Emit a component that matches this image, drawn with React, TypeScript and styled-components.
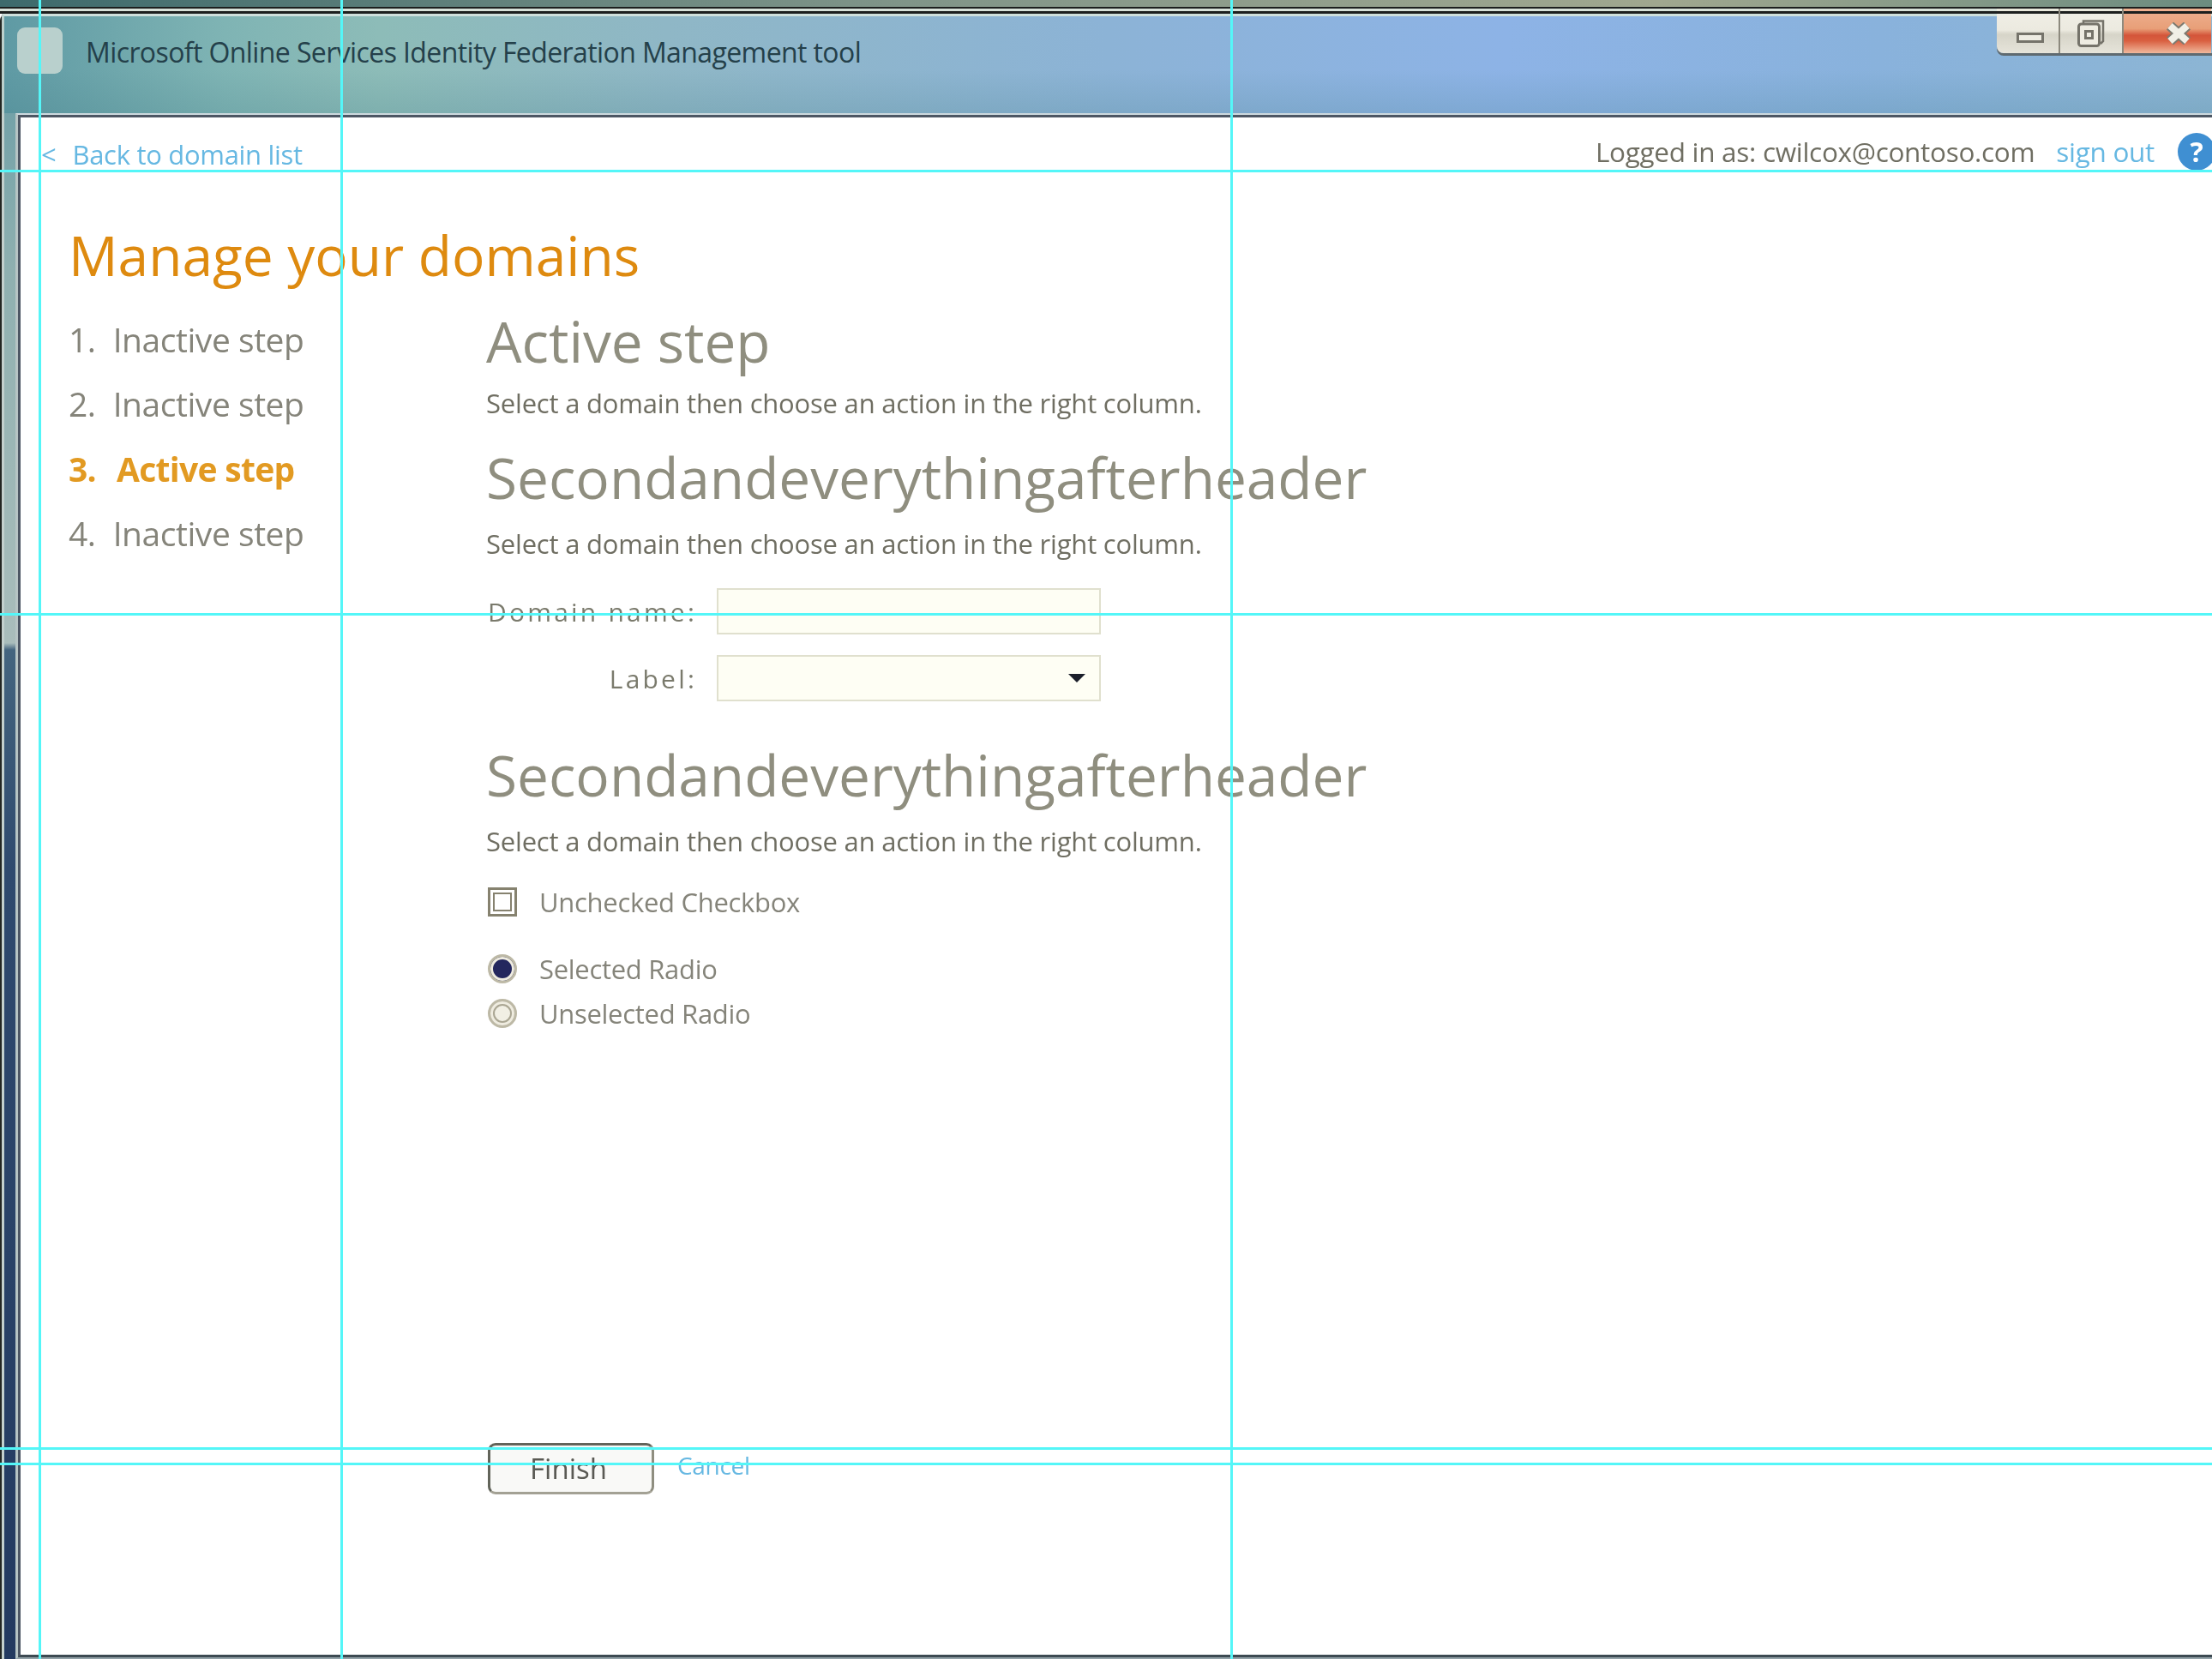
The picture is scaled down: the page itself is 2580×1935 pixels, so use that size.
import React from 'react';
import styled, { createGlobalStyle } from 'styled-components';

const fontStack = '"Open Sans", "Noto Sans", "Liberation Sans", sans-serif';
const orange = '#de8a0f';
const linkBlue = '#66b8e2';
const headGray = '#8f8e7f';
const textGray = '#6f6e62';

const GlobalStyle = createGlobalStyle`
  html, body { margin: 0; padding: 0; background: #fff; }
  body { font-family: ${fontStack}; }
`;

const Screen = styled.div`
  position: relative;
  width: 2580px;
  height: 1935px;
  overflow: hidden;
  display: flex;
  flex-direction: column;
  background: #fff;
`;

const DesktopStrip = styled.div`
  height: 8px;
  flex: none;
  background: linear-gradient(90deg, #3d6a6c 0%, #7f9488 40%, #a0a78f 75%, #6c8c80 100%);
`;

const Rule = styled.div<{ $h: number; $c: string }>`
  height: ${(p) => p.$h}px;
  flex: none;
  background: ${(p) => p.$c};
`;

const WindowFrame = styled.div`
  flex: 1;
  min-height: 0;
  display: flex;
  flex-direction: column;
  border-left: 2px solid #232622;
  border-top-left-radius: 8px;
  box-shadow: inset 3px 0 0 #c3d0cd;
  background: linear-gradient(180deg, #6399a3 0px, #8fb0b0 300px, #a9bdbb 734px, #44657f 742px, #2f4a6e 1000px, #233a60 100%);
`;

const TitleBar = styled.header`
  height: 116px;
  flex: none;
  display: flex;
  align-items: flex-start;
  gap: 27px;
  padding: 13px 0 0 15px;
  box-sizing: border-box;
  border-top: 3px solid #cfe0dc;
  border-left: 3px solid #bcd0cc;
  background:
    linear-gradient(180deg, rgba(60, 120, 130, 0) 55%, rgba(60, 120, 130, 0.18) 100%),
    linear-gradient(90deg, #5f9aa4 0%, #7fb4b4 10%, #8dbcb8 17%, #8fb7c6 30%, #8cb3d6 50%, #8db3e6 68%, #89b2dc 85%, #8cb5d4 100%);
`;

const AppIcon = styled.div`
  width: 53px;
  height: 54px;
  border-radius: 9px;
  background: #b9d0cd;
`;

const AppTitle = styled.h1`
  margin: 7px 0 0;
  font-size: 32px;
  line-height: 44px;
  font-weight: 400;
  letter-spacing: -0.6px;
  color: #24404a;
`;

const WindowControls = styled.div`
  position: absolute;
  top: 10px;
  right: 0;
  width: 251px;
  height: 52px;
  display: flex;
  border-bottom-left-radius: 8px;
  box-shadow: 0 3px 0 #5f6a70;
  overflow: hidden;
`;

const ControlButton = styled.div<{ $close?: boolean; $drop?: number; $nudge?: number }>`
  flex: ${(p) => (p.$close ? '0 0 102px' : '0 0 74px')};
  box-sizing: border-box;
  display: flex;
  align-items: center;
  justify-content: center;
  padding-top: ${(p) => 5 + (p.$drop ?? 0)}px;
  padding-left: ${(p) => (p.$close ? 26 : p.$nudge ?? 0)}px;
  border-right: ${(p) => (p.$close ? 'none' : '2px solid #8d8a7e')};
  background:
    linear-gradient(180deg, ${(p) => (p.$close ? '#eeb090' : '#e8e8dc')} 0 3px, #1c1f1e 3px 6px, transparent 6px),
    ${(p) =>
      p.$close
        ? 'linear-gradient(180deg, #eeb090 0%, #e89f78 45%, #d4553a 60%, #d95f40 72%, #f0b89c 100%)'
        : 'linear-gradient(180deg, #f0efe6 0%, #eceae0 48%, #d6d4c8 58%, #e6e4da 100%)'};
`;

const ClientRow = styled.div`
  flex: 1;
  min-height: 0;
  margin-left: 16px;
  border-left: 3px solid #b6c4c4;
  border-top: 2px solid #cdd9de;
  border-bottom: 2px solid #93a2a8;
  display: flex;
`;

const Client = styled.main`
  flex: 1;
  min-width: 0;
  display: flex;
  flex-direction: column;
  background: #fff;
  border-left: 3px solid #4d5764;
  border-top: 3px solid #4d5764;
  border-bottom: 3px solid #3d4a52;
`;

const SoftContent = styled.div`
  flex: 1;
  min-height: 0;
  display: flex;
  flex-direction: column;
  filter: blur(0.5px);
`;

const TopBar = styled.div`
  height: 62px;
  flex: none;
  display: flex;
  justify-content: space-between;
  align-items: flex-end;
  padding: 0 0 0 24px;
`;

const BackLink = styled.a`
  font-size: 31px;
  line-height: 42px;
  letter-spacing: -0.3px;
  color: ${linkBlue};
  text-decoration: none;
  display: flex;
  gap: 19px;
  margin-bottom: -2px;
`;

const UserArea = styled.div`
  display: flex;
  align-items: center;
  font-size: 31.5px;
  line-height: 44px;
  letter-spacing: -0.3px;
  color: ${textGray};
`;

const SignOut = styled.a`
  color: ${linkBlue};
  margin: 0 27px 0 25px;
  text-decoration: none;
`;

const HelpBadge = styled.div`
  width: 44px;
  height: 44px;
  margin-right: -4px;
  border-radius: 50%;
  background: #3f8fd2;
  color: #fff;
  font-size: 32px;
  font-weight: 700;
  text-align: center;
  line-height: 44px;
`;

const PageTitle = styled.h2`
  margin: 61px 0 0 56px;
  font-size: 64px;
  line-height: 76px;
  font-weight: 400;
  color: ${orange};
`;

const Columns = styled.div`
  display: flex;
  flex: 1;
  min-height: 0;
  margin-top: 22px;
`;

const StepList = styled.ol`
  list-style: none;
  margin: 0;
  padding: 0 0 0 56px;
  width: 543px;
  flex: none;
  box-sizing: border-box;
`;

const StepItem = styled.li<{ $active?: boolean }>`
  display: flex;
  height: 75.3px;
  align-items: center;
  gap: ${(p) => (p.$active ? '24px' : '20px')};
  font-size: 39px;
  font-weight: ${(p) => (p.$active ? 700 : 400)};
  letter-spacing: ${(p) => (p.$active ? '-0.7px' : '-0.45px')};
  color: ${(p) => (p.$active ? '#e29a22' : '#85847a')};
`;

const MainColumn = styled.section`
  flex: 1;
  display: flex;
  flex-direction: column;
  align-items: flex-start;
`;

const SectionTitle = styled.h3`
  margin: 0;
  font-size: 65.7px;
  line-height: 80px;
  font-weight: 400;
  color: ${headGray};
`;

const Description = styled.p<{ $gap: number }>`
  margin: ${(p) => p.$gap}px 0 0;
  font-size: 31px;
  line-height: 44px;
  letter-spacing: -0.2px;
  color: ${textGray};
`;

const FieldRow = styled.div`
  display: flex;
  align-items: center;
  gap: 23px;
  height: 54px;
`;

const FieldLabel = styled.label`
  width: 246px;
  text-align: right;
  font-size: 30px;
  letter-spacing: 3.2px;
  color: #7a7a6c;
`;

const FieldBox = styled.div`
  width: 448px;
  height: 54px;
  box-sizing: border-box;
  border: 2px solid #e0e0ce;
  background: #fefef4;
  display: flex;
  align-items: center;
  justify-content: flex-end;
  padding-right: 16px;
`;

const Caret = styled.span`
  width: 0;
  height: 0;
  border-left: 10px solid transparent;
  border-right: 10px solid transparent;
  border-top: 10px solid #1b1f2a;
`;

const OptionRow = styled.div`
  display: flex;
  align-items: center;
  gap: 26px;
  margin-left: 2px;
  height: 52px;
  font-size: 31px;
  letter-spacing: -0.3px;
  color: #85847a;
`;

const CheckboxMark = styled.span`
  width: 34px;
  height: 34px;
  flex: none;
  box-sizing: border-box;
  border: 3px solid #86826f;
  background: #fff;
  box-shadow: inset 0 0 0 3px #fff, inset 0 0 0 5px #86826f;
`;

const RadioMark = styled.span<{ $selected?: boolean }>`
  width: 34px;
  height: 34px;
  flex: none;
  box-sizing: border-box;
  border-radius: 50%;
  border: 3px solid #bdb9a6;
  background: ${(p) => (p.$selected ? '#24275e' : '#f1efe4')};
  box-shadow: inset 0 0 0 3px #efece0, inset 0 0 0 5px ${(p) => (p.$selected ? '#24275e' : '#aaa693')};
`;

const Actions = styled.div`
  display: flex;
  align-items: flex-start;
  gap: 27px;
  margin-left: 2px;
`;

const FinishButton = styled.button`
  width: 194px;
  height: 60px;
  padding: 0 6px 2px 0;
  border: 3px solid #62645a;
  border-right-color: #8f8e80;
  border-bottom-color: #a3a194;
  border-radius: 9px;
  background: #f9f9f7;
  font-family: ${fontStack};
  font-size: 33px;
  color: #5a5a54;
`;

const CancelLink = styled.a`
  font-size: 28px;
  line-height: 52px;
  letter-spacing: -0.3px;
  color: ${linkBlue};
  text-decoration: none;
`;

const Guide = styled.div<{ $x?: number; $y?: number }>`
  position: absolute;
  background: #54f6f8;
  ${(p) =>
    p.$x !== undefined
      ? `left: ${p.$x}px; top: 0; bottom: 0; width: 3px;`
      : `top: ${p.$y}px; left: 0; right: 0; height: 3px;`}
`;

const Spacer = styled.div<{ $h: number }>`
  height: ${(p) => p.$h}px;
  flex: none;
`;

const DESCRIPTION = 'Select a domain then choose an action in the right column.';
const SECOND_HEADER = 'Secondandeverythingafterheader';

export default function App() {
  return (
    <Screen>
      <GlobalStyle />
      <DesktopStrip />
      <Rule $h={2} $c="#1c1f1e" />
      <Rule $h={3} $c="#d6e0d8" />
      <Rule $h={3} $c="#1c1f1e" />
      <WindowFrame>
        <TitleBar>
          <AppIcon />
          <AppTitle>Microsoft Online Services Identity Federation Management tool</AppTitle>
        </TitleBar>
        <ClientRow>
          <Client>
            <SoftContent>
              <TopBar>
                <BackLink href="#">
                  <span>&lt;</span>
                  <span>Back to domain list</span>
                </BackLink>
                <UserArea>
                  Logged in as: cwilcox@contoso.com
                  <SignOut href="#">sign out</SignOut>
                  <HelpBadge>?</HelpBadge>
                </UserArea>
              </TopBar>
              <PageTitle>Manage your domains</PageTitle>
              <Columns>
                <StepList>
                  <StepItem>
                    <span>1.</span>
                    <span>Inactive step</span>
                  </StepItem>
                  <StepItem>
                    <span>2.</span>
                    <span>Inactive step</span>
                  </StepItem>
                  <StepItem $active>
                    <span>3.</span>
                    <span>Active step</span>
                  </StepItem>
                  <StepItem>
                    <span>4.</span>
                    <span>Inactive step</span>
                  </StepItem>
                </StepList>
                <MainColumn>
                  <SectionTitle>Active step</SectionTitle>
                  <Description $gap={10}>{DESCRIPTION}</Description>
                  <Spacer $h={25} />
                  <SectionTitle>{SECOND_HEADER}</SectionTitle>
                  <Description $gap={15}>{DESCRIPTION}</Description>
                  <Spacer $h={30} />
                  <FieldRow>
                    <FieldLabel>Domain name:</FieldLabel>
                    <FieldBox />
                  </FieldRow>
                  <Spacer $h={24} />
                  <FieldRow>
                    <FieldLabel>Label:</FieldLabel>
                    <FieldBox>
                      <Caret />
                    </FieldBox>
                  </FieldRow>
                  <Spacer $h={46} />
                  <SectionTitle>{SECOND_HEADER}</SectionTitle>
                  <Description $gap={15}>{DESCRIPTION}</Description>
                  <Spacer $h={23} />
                  <OptionRow>
                    <CheckboxMark />
                    Unchecked Checkbox
                  </OptionRow>
                  <Spacer $h={26} />
                  <OptionRow>
                    <RadioMark $selected />
                    Selected Radio
                  </OptionRow>
                  <OptionRow>
                    <RadioMark />
                    Unselected Radio
                  </OptionRow>
                  <Spacer $h={475} />
                  <Actions>
                    <FinishButton>Finish</FinishButton>
                    <CancelLink href="#">Cancel</CancelLink>
                  </Actions>
                </MainColumn>
              </Columns>
            </SoftContent>
          </Client>
        </ClientRow>
      </WindowFrame>
      <WindowControls>
        <ControlButton $drop={10} $nudge={5}>
          <svg width="32" height="12" viewBox="0 0 32 12">
            <rect x="1.5" y="1.5" width="29" height="9" fill="#eeece2" stroke="#75736a" strokeWidth="3" />
          </svg>
        </ControlButton>
        <ControlButton>
          <svg width="32" height="32" viewBox="0 0 32 32">
            <path d="M7 4 L7 1.5 L30 1.5 L30 25 L27 28" fill="none" stroke="#75736a" strokeWidth="2.5" />
            <rect x="1.5" y="5" width="24" height="25.5" rx="3" fill="#eeece2" stroke="#75736a" strokeWidth="3" />
            <rect x="9.5" y="13.5" width="8" height="8" fill="none" stroke="#75736a" strokeWidth="3" />
          </svg>
        </ControlButton>
        <ControlButton $close>
          <svg width="30" height="26" viewBox="0 0 30 26">
            <path d="M5 4 L25 22 M25 4 L5 22" stroke="#7c7a70" strokeWidth="12" />
            <path d="M5 4 L25 22 M25 4 L5 22" stroke="#f1efe6" strokeWidth="8" />
          </svg>
        </ControlButton>
      </WindowControls>
      <Guide $x={45} />
      <Guide $x={397} />
      <Guide $x={1435} />
      <Guide $y={198} />
      <Guide $y={715} />
      <Guide $y={1688} />
      <Guide $y={1706} />
    </Screen>
  );
}
